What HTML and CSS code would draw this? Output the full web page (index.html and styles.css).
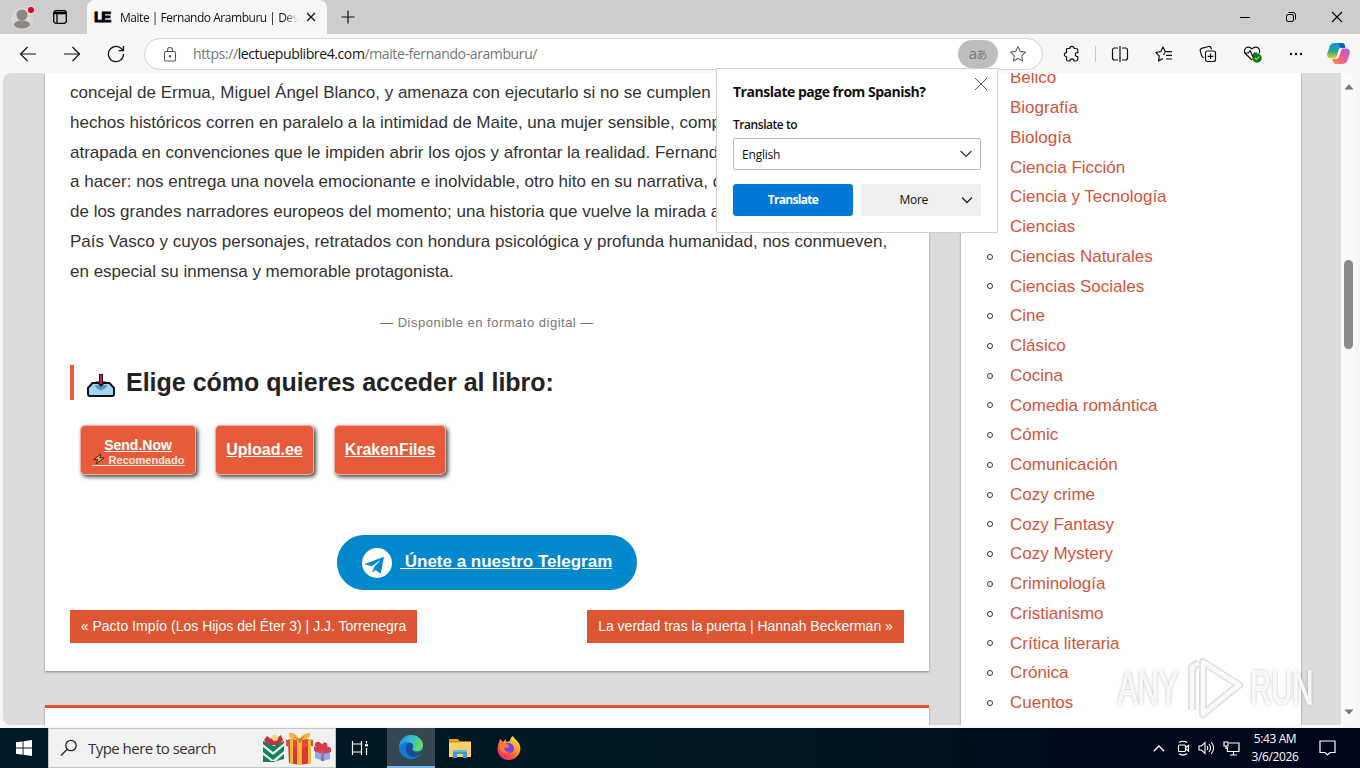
FILE: index.html
```html
<!DOCTYPE html>
<html lang="es">
<head>
<meta charset="utf-8">
<title>Maite | Fernando Aramburu</title>
<link rel="stylesheet" href="styles.css">
</head>
<body>
<div class="desktop">
  <header class="tabbar">
    <svg class="avatar" width="30" height="30" viewBox="0 0 30 30"><circle cx="15" cy="15" r="11" fill="#d9d6d4"/><circle cx="15" cy="11" r="5.500" fill="#8b8785"/><ellipse cx="15" cy="20.500" rx="8" ry="4" fill="#8b8785"/><circle cx="24" cy="6" r="4.500" fill="#e8cfd0"/><circle cx="24" cy="6" r="3" fill="#d00d20"/></svg>
    <svg class="workspaces" width="16" height="16" viewBox="0 0 16 16" fill="none" stroke="#000" stroke-width="1.300"><rect x="1.700" y="1.700" width="12.600" height="12.600" rx="2.500"/><path d="M2 3.500h12M2 4.500h12M5 4v10" /></svg>
    <div class="tab">
      <span class="favicon">LE</span>
      <span class="tab-title">Maite | Fernando Aramburu | Des</span>
      <svg width="10" height="10" viewBox="0 0 10 10" stroke="#111" stroke-width="1.200"><path d="M1 1l8 8M9 1l-8 8"/></svg>
    </div>
    <svg class="newtab" width="16" height="16" viewBox="0 0 16 16" stroke="#111" stroke-width="1.200"><path d="M8 1.500v13M1.500 8h13"/></svg>
    <div class="winbtns">
      <svg width="12" height="12" viewBox="0 0 12 12" stroke="#000"><path d="M1 6.500h10"/></svg>
      <svg width="12" height="12" viewBox="0 0 12 12" fill="none" stroke="#000"><rect x="1.500" y="3.500" width="7" height="7" rx="1.500"/><path d="M3.500 1.500h4.500a2.500 2.500 0 0 1 2.500 2.500v4.500"/></svg>
      <svg width="12" height="12" viewBox="0 0 12 12" stroke="#000" stroke-width="1.100"><path d="M1 1l10 10M11 1L1 11"/></svg>
    </div>
  </header>

  <nav class="toolbar">
    <div class="navbtns">
      <svg width="18" height="18" viewBox="0 0 18 18" fill="none" stroke="#111" stroke-width="1.200"><path d="M17 9H1.500M8.500 2L1.500 9l7 7"/></svg>
      <svg width="18" height="18" viewBox="0 0 18 18" fill="none" stroke="#111" stroke-width="1.200"><path d="M1 9h15.500M9.500 2l7 7-7 7"/></svg>
      <svg width="18" height="18" viewBox="0 0 18 18" fill="none" stroke="#111" stroke-width="1.300"><path d="M16.600 9A7.600 7.600 0 1 1 14 3.300L16.300 5.500M16.500 1v4.700h-4.800"/></svg>
    </div>
    <div class="omnibox">
      <svg class="lock" width="14" height="17" viewBox="0 0 14 17" fill="none" stroke="#555" stroke-width="1.100"><rect x="1.500" y="5.500" width="11" height="9.500" rx="1.500"/><path d="M4.500 5.500V4a2.500 2.500 0 0 1 5 0v1.500"/><circle cx="7" cy="10.200" r=".7" fill="#555"/></svg>
      <span class="url">https://<b>lectuepublibre4.com</b>/maite-fernando-aramburu/</span>
      <span class="lang">a<i>あ</i></span>
      <svg class="star" width="18" height="18" viewBox="0 0 18 18" fill="none" stroke="#666" stroke-width="1.100" stroke-linejoin="round"><path d="M9 1.500l2.300 4.900 5.200.7-3.800 3.700.9 5.300L9 13.600l-4.600 2.500.9-5.300L1.500 7.100l5.200-.7z"/></svg>
    </div>
    <svg class="t-ext" width="18" height="18" viewBox="0 0 18 18" fill="none" stroke="#111" stroke-width="1.200" stroke-linejoin="round"><path d="M4.500 3.500h2.300a2.100 2.100 0 0 1 4.200 0H13a1.800 1.800 0 0 1 1.800 1.800v2.400h-.6a1.900 1.900 0 0 0 0 3.800h.6v2.700A1.800 1.800 0 0 1 13 16h-1.900a2.100 2.100 0 0 0-4.200 0H5.300a1.800 1.800 0 0 1-1.800-1.800v-2.400a2.100 2.100 0 0 1 0-4.200V4.500a1 1 0 0 1 1-1z"/></svg>
    <span class="t-sep"></span>
    <svg class="t-split" width="18" height="18" viewBox="0 0 18 18" fill="none" stroke="#111" stroke-width="1.200"><path d="M7 3H3.500a2 2 0 0 0-2 2v8a2 2 0 0 0 2 2H7M11 3h3.500a2 2 0 0 1 2 2v8a2 2 0 0 1-2 2H11M9 1v16"/></svg>
    <svg class="t-fav" width="18" height="18" viewBox="0 0 18 18" fill="none" stroke="#111" stroke-width="1.200" stroke-linejoin="round"><path d="M8 13.500l-4.500 2.400.8-5L.8 7.500l4.900-.8L8 2l2.300 4.700H17M11 10.300h6M11 14h6M10 7.500L8.500 10"/></svg>
    <svg class="t-coll" width="18" height="18" viewBox="0 0 18 18" fill="none" stroke="#111" stroke-width="1.200"><rect x="6.500" y="6" width="10" height="10.500" rx="2"/><path d="M11.500 8.500v5.500M8.700 11.300h5.600M5 12.500l-1-.3c-1-.4-1.300-1.200-1.500-2L1.200 5.800c-.3-1.200.3-2 1.400-2.400L9.700 1.500c1.200-.3 2 .3 2.300 1.300l.5 1.500"/></svg>
    <svg class="t-heart" width="20" height="18" viewBox="0 0 20 18" fill="none" stroke="#111" stroke-width="1.200" stroke-linejoin="round"><path d="M9 15L2.500 8.800C.5 6.500 1.300 3 4.500 2.200 6.500 1.800 8 2.700 9 4c1-1.300 2.500-2.200 4.500-1.800 3 .6 4 4 2.500 6M1 8h4.500l1.700-2.500 2.500 6L11.500 8H14"/><circle cx="14" cy="13" r="4.700" fill="#107c10" stroke="none"/><path d="M11.800 13l1.500 1.500 2.800-2.900" stroke="#fff" stroke-width="1"/></svg>
    <svg class="t-dots" width="14" height="4" viewBox="0 0 14 4" fill="#111"><circle cx="2" cy="2" r="1.200"/><circle cx="7" cy="2" r="1.200"/><circle cx="12" cy="2" r="1.200"/></svg>
    <svg class="t-copilot" width="23" height="21" viewBox="0 0 23 21"><defs><linearGradient id="c1" x1="0" y1="0" x2="0" y2="1"><stop offset="0" stop-color="#168de8"/><stop offset=".55" stop-color="#2cab91"/><stop offset="1" stop-color="#f3d016"/></linearGradient><linearGradient id="c2" x1="1" y1="0" x2="0" y2="1"><stop offset="0" stop-color="#a95bea"/><stop offset=".5" stop-color="#ec5a93"/><stop offset="1" stop-color="#ff8d54"/></linearGradient></defs><path d="M8 0h7c1.500 0 2.500 1 2.800 2.300L18.300 5H14c-1.500 0-2 .8-2.300 1.800L10 13c-.5 1.700-1.500 2.500-3 2.500H3.500C1 15.500-.4 13 .3 10.500L2.800 3C3.500 1 5.500 0 8 0z" fill="url(#c1)"/><path d="M15 21H9c-1.600 0-2.500-1-3-2.600L5.200 16H8c1.700 0 2.800-1 3.300-2.600L13 8c.5-1.700 1.500-2.500 3-2.500h3.500c2.500 0 3.900 2.500 3.200 5l-2.500 7.500c-.7 2-2.700 3-5.200 3z" fill="url(#c2)"/><path d="M11 0h4c1.500 0 2.500 1 2.800 2.300l.5 2.700h-4.500z" fill="#1460bd"/><path d="M12.500 6h2.300l-3.600 9.500H8.700c1.200-.4 2-1.200 2.400-2.400z" fill="#f7f7f7"/></svg>
  </nav>

  <main class="viewport">
    <div class="content">
      <article class="card post">
        <p class="synopsis">
          <span>concejal de Ermua, Miguel Ángel Blanco, y amenaza con ejecutarlo si no se cumplen</span>
          <span>hechos históricos corren en paralelo a la intimidad de Maite, una mujer sensible, compr</span>
          <span>atrapada en convenciones que le impiden abrir los ojos y afrontar la realidad. Fernando</span>
          <span>a hacer: nos entrega una novela emocionante e inolvidable, otro hito en su narrativa, qu</span>
          <span>de los grandes narradores europeos del momento; una historia que vuelve la mirada al</span>
          <span>País Vasco y cuyos personajes, retratados con hondura psicológica y profunda humanidad, nos conmueven,</span>
          <span>en especial su inmensa y memorable protagonista.</span>
        </p>
        <p class="available">— Disponible en formato digital —</p>
        <h3 class="choose">
          <svg width="30" height="26" viewBox="0 0 30 26"><path d="M6.500 11h17l4.500 5v6.300a1.800 1.800 0 0 1-1.800 1.800H3.800A1.800 1.800 0 0 1 2 22.300V16z" fill="#a3d6f5" stroke="#111" stroke-width="2" stroke-linejoin="round"/><path d="M8.500 13h13L19 16.500l-4 2-4-2z" fill="#5797c6"/><path d="M13 2h4v7.500h3.500L15 14.700 9.500 9.500H13z" fill="#111"/><path d="M13.900 2.600h2.200v8.700L15 12.600l-1.100-1.300z" fill="#e0173d"/></svg>
          <span>Elige cómo quieres acceder al libro:</span>
        </h3>
        <div class="downloads">
          <a class="dl send"><span>Send.Now</span><small><svg width="14" height="13" viewBox="0 0 14 13"><path d="M9 1L1.300 7.200h4.500L3.800 12l8.700-6.700H8z" fill="#f7a83b" stroke="#222" stroke-width="1"/></svg><em>&nbsp;Recomendado</em></small></a>
          <a class="dl upload">Upload.ee</a>
          <a class="dl kraken">KrakenFiles</a>
        </div>
        <a class="telegram">
          <svg width="30" height="30" viewBox="0 0 30 30"><circle cx="15" cy="15" r="15" fill="#fff"/><path d="M2.300 16.300L22 8.700l-3.300 17-5.200-3.800-2.700 2.600-1-6.200z" fill="#0088cc"/><path d="M9.800 18.300L19 11.500l-7 7.800-1.200 5z" fill="#fff"/></svg>
          <span>&nbsp;Únete a nuestro Telegram</span>
        </a>
        <div class="pager"><a class="prev">« Pacto Impío (Los Hijos del Éter 3) | J.J. Torrenegra</a><a class="next">La verdad tras la puerta | Hannah Beckerman »</a></div>
      </article>
      <section class="card comments"></section>
    </div>
    <aside class="card genres">
      <ul>
        <li>Bélico</li><li>Biografía</li><li>Biología</li><li>Ciencia Ficción</li><li>Ciencia y Tecnología</li><li>Ciencias</li><li>Ciencias Naturales</li><li>Ciencias Sociales</li><li>Cine</li><li>Clásico</li><li>Cocina</li><li>Comedia romántica</li><li>Cómic</li><li>Comunicación</li><li>Cozy crime</li><li>Cozy Fantasy</li><li>Cozy Mystery</li><li>Criminología</li><li>Cristianismo</li><li>Crítica literaria</li><li>Crónica</li><li>Cuentos</li>
      </ul>
    </aside>
    <div class="scrollbar">
      <svg width="10" height="6" viewBox="0 0 10 6"><path d="M5 0l4.500 5.500h-9z" fill="#777"/></svg>
      <span class="thumb"></span>
      <svg class="down" width="10" height="6" viewBox="0 0 10 6"><path d="M5 5.500L.5.500h9z" fill="#777"/></svg>
    </div>
  </main>

  <footer class="taskbar">
    <svg class="start" width="16" height="16" viewBox="0 0 16 16" fill="#fff"><path d="M0 2.300L6.600 1.400v6.200H0zM7.500 1.200L16 0v7.600H7.500zM0 8.500h6.600v6.200L0 13.800zM7.500 8.500H16V16l-8.500-1.200z"/></svg>
    <div class="search">
      <svg width="18" height="18" viewBox="0 0 18 18" fill="none" stroke="#222" stroke-width="1.300"><circle cx="11" cy="6.500" r="5.200"/><path d="M7.200 10.200L1 16.500"/></svg>
      <span>Type here to search</span>
      <svg class="gifts" width="70" height="34" viewBox="0 0 70 34"><path d="M2 8l3-4 4 3 3-4 3 3 4-3 2 5-4 5H5z" fill="#cf3034"/><circle cx="13" cy="6" r="3" fill="#e8dc85"/><path d="M1 9l11 5 10-5v18l-11 3H1z" fill="#13815d"/><path d="M1 12l10 8 11-9v3l-11 9L1 15zM1 20l10 8 11-9v3l-8 7H9L1 23z" fill="#e6eee3"/><path d="M26 10h23v21l-11 2-11-2z" fill="#d93730"/><path d="M24 8l12-2 15 2v6l-14 2-13-2z" fill="#e64a35"/><path d="M28 8l3-1v25l-3-1zM35 8h5v25h-5zM46 8l3-1v24l-3 1z" fill="#eeb83f"/><path d="M37 8C30 9 26 5 27 1c5-1 9 3 10 7zm0 0c8 1 12-3 11-7-5 0-9 3-11 7z" fill="#f0b83b"/><path d="M31 3l6 5 6-5-5 8z" fill="#bf7d22"/><path d="M53 17h15v10l-7 2-8-3z" fill="#8fabdf"/><path d="M52 15l8-3 9 4v4l-8 2-9-3z" fill="#cf4057"/><path d="M53 14c-1-5 5-6 7-1 2-5 7-2 5 2l-5 3z" fill="#d93b47"/><path d="M59 18l3 1v10h-3z" fill="#b55e98"/></svg>
    </div>
    <svg class="taskview" width="17" height="16" viewBox="0 0 17 16" fill="none" stroke="#fff" stroke-width="1.200"><path d="M1.500 1v3h9V1M1.500 15v-3h9v3M1.500 4.500v7M10.500 4.500v7M15.500 1v2.500M15.500 8v7"/><path d="M14 5.300h3" stroke-width="2.200"/></svg>
    <div class="edge-slot">
      <svg width="24" height="24" viewBox="0 0 24 24"><defs><linearGradient id="e1" x1="0" y1="0" x2="1" y2=".4"><stop offset="0" stop-color="#2389dc"/><stop offset=".55" stop-color="#35c1d0"/><stop offset="1" stop-color="#67d857"/></linearGradient></defs><circle cx="12" cy="12" r="12" fill="#127dce"/><path d="M.3 11C1 4 6 0 12 0c7 0 12 5 12 10 0 4-3 6-6.500 6-3 0-4-1-3.500-2 1.500-3-.5-7-5-7C5 7 2 9 .3 11z" fill="url(#e1)"/><path d="M9 8.500c-4 3-3 11 3 13 4 1.500 8-.5 10-4-4 2.500-9 0-9-3.500 0-2 1.500-2.500 1-4-.7-2-3.500-2.500-5-1.500z" fill="#124f9e"/><path d="M13 13c-1 3 4 6 9 3.500L24 15v3l-1.500 1c-2.500.5-4.500 0-6-.5-2.500-.6-4.500-3-3.500-5.500z" fill="#37474f"/></svg>
    </div>
    <svg class="explorer" width="22" height="19" viewBox="0 0 22 19"><path d="M0 0h9l2 2.500H0z" fill="#e8a321"/><path d="M0 2.500h22v15.500H0z" fill="#fcd364"/><path d="M0 2h12v1.500H0z" fill="#d78e19"/><path d="M4 11h14v8h-4v-4H8v4H4z" fill="#3e9bd6"/><path d="M4 11h14v2H4z" fill="#5ab8ec"/></svg>
    <svg class="firefox" width="24" height="24" viewBox="0 0 24 24"><defs><linearGradient id="f1" x1=".9" y1="0" x2=".2" y2="1"><stop offset="0" stop-color="#fff04a"/><stop offset=".4" stop-color="#ffa02d"/><stop offset=".75" stop-color="#ff4b44"/><stop offset="1" stop-color="#e3278b"/></linearGradient></defs><path d="M3 3l3 3 3-3v3l4-1c0-2 1-4 3-5 1 3 6 5 7 10 2 7-4 14-11 14S.5 19 .5 13C.5 9 2 7 3 3z" fill="url(#f1)"/><path d="M8 7.500c5-1.500 9 1 9 5s-4 5.500-7.500 4.500C6.500 16 6 13.500 7 12l4-1c-.5-1.500-2-2-3-3.500z" fill="#7542e5"/><path d="M3 8l6-1 3 3-1 1.500H7.500c-1 3 2 5 5.500 4-3 3.500-8 2.500-10-2z" fill="#ff7a32"/></svg>
    <div class="tray">
      <svg width="12" height="7" viewBox="0 0 12 7" fill="none" stroke="#fff" stroke-width="1.300"><path d="M.8 6.200L6 1l5.200 5.200"/></svg>
      <svg class="meet" width="13" height="16" viewBox="0 0 13 16" fill="none" stroke="#fff" stroke-width="1.200"><rect x="1.500" y="5" width="7" height="6.500" rx="1"/><path d="M9 7.500l2.500-2v5.500L9 9M2 2.500q4-2.500 8 0M2 13.800q4 2.500 8 0"/></svg>
      <svg class="vol" width="17" height="16" viewBox="0 0 17 16" fill="none" stroke="#fff" stroke-width="1.100"><path d="M1 6h2.500L7 2.500v11L3.500 10H1zM9 6q1.500 2 0 4M11 4q3 4 0 8M13.200 2q4.800 6 0 12"/></svg>
      <svg class="net" width="17" height="15" viewBox="0 0 17 15" fill="none" stroke="#fff" stroke-width="1.200"><path d="M6 2h10v8.500H4.500V6M10.500 10.500V14M7 14h7M1 1h4v4H1zM3 5v2.500h1.500"/></svg>
      <div class="clock"><span>5:43 AM</span><span>3/6/2026</span></div>
      <svg class="note" width="17" height="16" viewBox="0 0 17 16" fill="none" stroke="#fff" stroke-width="1.200"><path d="M1 1h15v11.500h-5L8.500 15 6 12.500H1z"/></svg>
    </div>
  </footer>

  <div class="popup">
    <div class="popup-head"><strong>Translate page from Spanish?</strong><svg width="14" height="14" viewBox="0 0 14 14" stroke="#555"><path d="M1 1l12 12M13 1L1 13"/></svg></div>
    <label>Translate to</label>
    <div class="select"><span>English</span><svg width="12" height="8" viewBox="0 0 12 8" fill="none" stroke="#333" stroke-width="1.200"><path d="M.6 1L6 6.500 11.400 1"/></svg></div>
    <div class="actions"><span class="primary">Translate</span><span class="more"><span>More</span><svg width="12" height="8" viewBox="0 0 12 8" fill="none" stroke="#222" stroke-width="1.300"><path d="M1 1.500l5 5 5-5"/></svg></span></div>
  </div>

  <div class="watermark"><span>ANY</span><svg width="60" height="66" viewBox="0 0 60 66" fill="none" stroke-linejoin="round"><g stroke="#999" stroke-opacity=".3" stroke-width="8"><path d="M17 7l36 23-36 29zM6 55V12l7-4"/></g><g stroke="#fff" stroke-opacity=".8" stroke-width="4.500"><path d="M17 7l36 23-36 29zM6 55V12l7-4"/></g></svg><span>RUN</span></div>
</div>
</body>
</html>
```
FILE: styles.css
```css
*, *::before { box-sizing: border-box; }
body { margin: 0; font-family: "Liberation Sans", Arial, sans-serif; }
svg { display: block; flex: none; }
p, h3, ul { margin: 0; padding: 0; }

.desktop { position: relative; width: 1360px; height: 768px; overflow: hidden; display: flex; flex-direction: column; background: #f7f7f7; }

/* tab strip */
.tabbar { height: 34px; flex: none; background: #cdcdcd; display: flex; align-items: center; font-family: "Open Sans", sans-serif; }
.avatar { margin-left: 7px; margin-top: 3px; }
.workspaces { margin-left: 15px; }
.tab { margin-left: 19px; width: 240px; height: 34px; background: #f7f7f7; border-radius: 8px 8px 0 0; display: flex; align-items: center; padding: 0 11px 0 7px; }
.favicon { width: 17px; font: 900 15px/16px "Liberation Sans", sans-serif; letter-spacing: -2px; -webkit-text-stroke: 1px #000; }
.tab-title { margin-left: 9px; width: 178px; margin-right: 8px; font-size: 12px; letter-spacing: -.47px; white-space: nowrap; overflow: hidden; color: #111; -webkit-mask-image: linear-gradient(90deg, #000 92%, transparent); mask-image: linear-gradient(90deg, #000 92%, transparent); }
.newtab { margin-left: 13px; }
.winbtns { margin-left: auto; margin-right: 17px; display: flex; gap: 34px; }

/* toolbar */
.toolbar { height: 39px; flex: none; display: flex; align-items: center; }
.navbtns { display: flex; gap: 26px; margin-left: 19px; }
.omnibox { margin-left: 19px; width: 899px; height: 32px; border-radius: 16px; background: #fff; border: 1px solid #d4d4d4; display: flex; align-items: center; padding: 0 15px 0 18px; margin-top: 1px; }
.url { margin-left: 16px; font: 14px/20px "Open Sans", sans-serif; letter-spacing: -.39px; color: #767676; }
.url b { font-weight: 400; color: #111; }
.lang { margin-left: auto; width: 40px; height: 28px; border-radius: 14px; background: #bebebe; color: #777; font: 15px/26px "Open Sans", "Noto Sans CJK JP", sans-serif; text-align: center; }
.lang i { font-style: normal; font-size: 11px; margin-left: -1px; }
.star { margin-left: 11px; }
.t-ext { margin-left: 20px; }
.t-sep { width: 1px; height: 16px; background: #c8c8c8; margin-left: 14px; }
.t-split { margin-left: 15px; }
.t-fav, .t-coll { margin-left: 26px; }
.t-heart { margin-left: 26px; }
.t-dots { margin-left: 26px; }
.t-copilot { margin-left: 24px; }

/* page */
.viewport { height: 652px; flex: none; margin: 0 4px 3px 3px; border-radius: 8px; background: #dcdcdc; overflow: hidden; display: flex; }
.content { width: 884px; margin-left: 42px; }
.card { background: #fff; box-shadow: 0 1px 2px rgba(0,0,0,.4); }
.post { height: 598px; padding: 5px 25px 0; display: flex; flex-direction: column; }
.synopsis { font-size: 17px; line-height: 29.75px; color: #333; white-space: nowrap; }
.synopsis span { display: block; }
.available { margin-top: 28px; text-align: center; font-size: 13px; line-height: 18px; letter-spacing: .5px; color: #777; }
.choose { margin-top: 33px; height: 35px; border-left: 4px solid #e85b3a; padding-left: 12px; display: flex; align-items: center; font-size: 25px; color: #222; }
.choose span { margin-left: 10px; }
.choose svg { margin-top: 4px; }
.downloads { display: flex; gap: 19px; margin: 25px 0 0 10px; }
.dl { height: 50px; border-radius: 5px; border: 1px solid #e6b1a3; background: #e85b3a; box-shadow: 2px 2px 4px rgba(0,0,0,.75); color: #fff; text-decoration: underline; font-weight: 700; font-size: 16px; line-height: 47px; text-align: center; white-space: nowrap; }
.send { width: 116px; font-size: 14px; line-height: 16px; padding-top: 11px; }
.send span { display: block; line-height: 16px; text-decoration: underline; }
.send small { display: flex; justify-content: center; font-size: 11px; line-height: 14px; color: #ffe6df; }
.send em { font-style: normal; text-decoration: underline; }
.send svg { border-bottom: 1px solid #ffe6df; }
.upload { width: 99px; margin-right: 1px; }
.kraken { width: 112px; }
.telegram { align-self: center; margin-top: 60px; width: 300px; height: 55px; flex: none; border-radius: 27px; background: #0088cc; color: #fff; font-weight: 700; font-size: 17px; display: flex; align-items: center; padding-left: 25px; }
.telegram span { margin-left: 8px; margin-top: -2px; text-decoration: underline; white-space: nowrap; }
.pager { display: flex; justify-content: space-between; margin-top: 20px; }
.pager a { background: #dd5533; color: #fff; font-size: 14px; line-height: 33px; height: 33px; text-align: center; white-space: nowrap; }
.prev { width: 347px; }
.next { width: 317px; }
.comments { margin-top: 34px; height: 30px; border-top: 3px solid #dd5533; }
.genres { width: 340px; margin-left: 32px; height: 652px; overflow: hidden; }
.genres ul { margin-top: -9.700px; padding-left: 26px; list-style: none; font-size: 17px; line-height: 29.75px; color: #d3543c; }
.genres li { display: flex; align-items: center; }
.genres li::before { content: ""; width: 6px; height: 6px; border: 1px solid #333; border-radius: 50%; margin-right: 17px; }
.scrollbar { width: 15px; margin-left: auto; background: #fafafa; display: flex; flex-direction: column; align-items: center; padding: 11px 0 10px; }
.thumb { width: 9px; height: 89px; border-radius: 5px; background: #8a8a8a; margin-top: 170px; }
.down { margin-top: auto; }

/* translate bubble */
.popup { position: absolute; left: 716px; top: 68px; width: 282px; height: 165px; background: #fff; border: 1px solid #cfcfcf; padding: 9px 16px; font-family: "Open Sans", sans-serif; color: #111; }
.popup-head { display: flex; height: 28px; }
.popup-head strong { font-size: 14px; line-height: 28px; letter-spacing: -.49px; white-space: nowrap; flex: 1; }
.popup-head svg { margin-right: -7px; margin-top: -1px; }
.popup label { display: block; font-size: 12px; font-weight: 600; line-height: 18px; margin-top: 10px; letter-spacing: -.45px; }
.select { margin-top: 4px; height: 32px; border: 1px solid #bbb; border-radius: 2px; display: flex; justify-content: space-between; align-items: center; padding: 0 8px; font-size: 12px; letter-spacing: -.2px; }
.actions { display: flex; gap: 8px; margin-top: 14px; font-size: 12px; line-height: 32px; }
.primary, .more { width: 120px; height: 32px; border-radius: 3px; text-align: center; }
.primary { background: #0078d7; color: #fff; font-weight: 700; letter-spacing: -.7px; }
.more { background: #efefef; display: flex; align-items: center; justify-content: flex-end; padding-right: 8px; gap: 33px; letter-spacing: -.3px; }

/* taskbar */
.taskbar { height: 40px; flex: none; background: linear-gradient(90deg, #001b26, #001620 60%, #00091b 85%, #00061a); display: flex; align-items: center; font-family: "Open Sans", sans-serif; }
.start { margin-left: 16px; }
.search { margin-left: 16px; width: 288px; height: 40px; background: #f1f1f1; border: 1px solid #c6c6c6; display: flex; align-items: center; padding: 0 3px 0 11px; }
.search span { margin-left: 10px; font-size: 15px; letter-spacing: -.53px; color: #333; white-space: nowrap; }
.gifts { margin-left: auto; margin-top: 2px; }
.taskview { margin-left: 15px; }
.edge-slot { margin-left: 19px; width: 48px; height: 40px; background: #37474f; border-bottom: 2px solid #76b9ed; display: flex; align-items: center; justify-content: center; }
.explorer { margin-left: 14px; }
.firefox { margin-left: 26px; }
.tray { margin-left: auto; margin-right: 24px; display: flex; align-items: center; color: #fff; }
.meet { margin-left: 12px; }
.vol { margin-left: 8px; }
.net { margin-left: 8px; }
.clock { width: 60px; margin-left: 5px; font-size: 12px; line-height: 18px; letter-spacing: -.4px; display: flex; flex-direction: column; align-items: center; }
.note { margin-left: 14px; }

.watermark { position: absolute; left: 1118px; top: 655px; display: flex; align-items: center; gap: 4px; }
.watermark span { width: 64px; font: 400 48px/60px "Liberation Sans", sans-serif; color: rgba(255,255,255,.85); -webkit-text-stroke: 1.500px rgba(255,255,255,.85); text-shadow: 0 0 4px rgba(110,110,110,.7); transform: scaleX(.61); transform-origin: 0 50%; }
```
